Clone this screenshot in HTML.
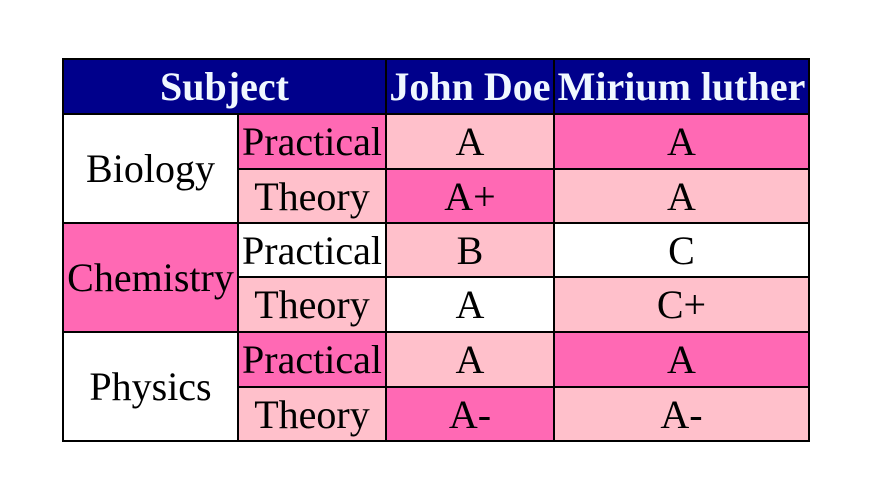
<!DOCTYPE html><html><head><style>
body{margin:0;width:893px;height:497px;background:#fff;position:relative;overflow:hidden;font-family:"Liberation Serif",serif;}
#t{position:absolute;left:62px;top:58px;width:748px;height:384px;background:#000;}
.c{position:absolute;display:flex;align-items:center;justify-content:center;font-size:40px;color:#000;white-space:nowrap;}
.h{background:#00008b;color:#f0f8ff;font-weight:bold;}
.w{background:#fff}.p{background:#ffc0cb}.k{background:#ff69b4}
</style></head><body><div id="t"></div>
<div class="c h" style="left:64px;top:60px;width:321px;height:53px">Subject</div>
<div class="c h" style="left:387px;top:60px;width:166px;height:53px">John Doe</div>
<div class="c h" style="left:555px;top:60px;width:253px;height:53px">Mirium luther</div>

<div class="c w" style="left:64px;top:115px;width:173px;height:107px">Biology</div>
<div class="c k" style="left:64px;top:224px;width:173px;height:107px">Chemistry</div>
<div class="c w" style="left:64px;top:333px;width:173px;height:107px">Physics</div>

<div class="c k" style="left:239px;top:115px;width:146px;height:53px">Practical</div>
<div class="c p" style="left:387px;top:115px;width:166px;height:53px">A</div>
<div class="c k" style="left:555px;top:115px;width:253px;height:53px">A</div>

<div class="c p" style="left:239px;top:170px;width:146px;height:52px">Theory</div>
<div class="c k" style="left:387px;top:170px;width:166px;height:52px">A+</div>
<div class="c p" style="left:555px;top:170px;width:253px;height:52px">A</div>

<div class="c w" style="left:239px;top:224px;width:146px;height:52px">Practical</div>
<div class="c p" style="left:387px;top:224px;width:166px;height:52px">B</div>
<div class="c w" style="left:555px;top:224px;width:253px;height:52px">C</div>

<div class="c p" style="left:239px;top:278px;width:146px;height:53px">Theory</div>
<div class="c w" style="left:387px;top:278px;width:166px;height:53px">A</div>
<div class="c p" style="left:555px;top:278px;width:253px;height:53px">C+</div>

<div class="c k" style="left:239px;top:333px;width:146px;height:53px">Practical</div>
<div class="c p" style="left:387px;top:333px;width:166px;height:53px">A</div>
<div class="c k" style="left:555px;top:333px;width:253px;height:53px">A</div>

<div class="c p" style="left:239px;top:388px;width:146px;height:52px">Theory</div>
<div class="c k" style="left:387px;top:388px;width:166px;height:52px">A-</div>
<div class="c p" style="left:555px;top:388px;width:253px;height:52px">A-</div>
</body></html>
